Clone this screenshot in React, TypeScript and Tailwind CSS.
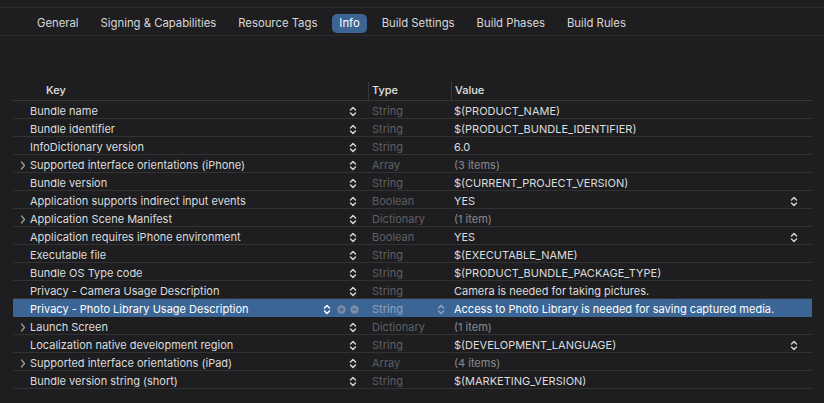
import React from "react";

type Row = {
  key: string;
  type: string;
  value: string;
  expandable?: boolean;
  dimValue?: boolean;
  picker?: boolean;
  selected?: boolean;
};

const rows: Row[] = [
  { key: "Bundle name", type: "String", value: "$(PRODUCT_NAME)" },
  { key: "Bundle identifier", type: "String", value: "$(PRODUCT_BUNDLE_IDENTIFIER)" },
  { key: "InfoDictionary version", type: "String", value: "6.0" },
  { key: "Supported interface orientations (iPhone)", type: "Array", value: "(3 items)", expandable: true, dimValue: true },
  { key: "Bundle version", type: "String", value: "$(CURRENT_PROJECT_VERSION)" },
  { key: "Application supports indirect input events", type: "Boolean", value: "YES", picker: true },
  { key: "Application Scene Manifest", type: "Dictionary", value: "(1 item)", expandable: true, dimValue: true },
  { key: "Application requires iPhone environment", type: "Boolean", value: "YES", picker: true },
  { key: "Executable file", type: "String", value: "$(EXECUTABLE_NAME)" },
  { key: "Bundle OS Type code", type: "String", value: "$(PRODUCT_BUNDLE_PACKAGE_TYPE)" },
  { key: "Privacy - Camera Usage Description", type: "String", value: "Camera is needed for taking pictures." },
  {
    key: "Privacy - Photo Library Usage Description",
    type: "String",
    value: "Access to Photo Library is needed for saving captured media.",
    selected: true,
  },
  { key: "Launch Screen", type: "Dictionary", value: "(1 item)", expandable: true, dimValue: true },
  { key: "Localization native development region", type: "String", value: "$(DEVELOPMENT_LANGUAGE)", picker: true },
  { key: "Supported interface orientations (iPad)", type: "Array", value: "(4 items)", expandable: true, dimValue: true },
  { key: "Bundle version string (short)", type: "String", value: "$(MARKETING_VERSION)" },
];

const tabs = ["General", "Signing & Capabilities", "Resource Tags", "Info", "Build Settings", "Build Phases", "Build Rules"];

// 위아래 화살표 (팝업 버튼)
const Stepper = ({ className = "" }: { className?: string }) => (
  <svg width="8" height="11" viewBox="0 0 8 11" className={className} fill="none" stroke="currentColor" strokeWidth={1.5} strokeLinecap="round" strokeLinejoin="round">
    <path d="M1.5 4 L4 1.5 L6.5 4" />
    <path d="M1.5 7 L4 9.5 L6.5 7" />
  </svg>
);

const Chevron = () => (
  <svg width="6" height="9" viewBox="0 0 6 9" fill="none" stroke="currentColor" strokeWidth={1.2} strokeLinecap="round" strokeLinejoin="round">
    <path d="M1.5 1 L4.5 4.5 L1.5 8" />
  </svg>
);

const CircleIcon = ({ minus }: { minus?: boolean }) => (
  <svg width="9" height="9" viewBox="0 0 9 9" className="text-[#7d8ea4]">
    <circle cx="4.5" cy="4.5" r="4.2" fill="currentColor" />
    <path d={minus ? "M2.3 4.5 H6.7" : "M2.3 4.5 H6.7 M4.5 2.3 V6.7"} stroke="#3e6898" strokeWidth={1.3} />
  </svg>
);

const App = () => {
  return (
    <div
      className="w-[824px] h-[403px] overflow-hidden bg-[#1e1e21] text-[#dcdcdc]"
      style={{ fontFamily: "Inter, 'Liberation Sans', sans-serif" }}
    >
      {/* 상단 탭 */}
      <div className="h-[8px] border-b border-[#2c2c2f]" />
      <div className="h-[28px] flex items-center pt-[3px] pl-[30px] gap-[8px] border-b border-[#2c2c2f] text-[11.3px] text-[#d8d8d8]">
        {tabs.map((t) => (
          <div
            key={t}
            className={`px-[7px] h-[19px] flex items-center rounded-[5px] ${t === "Info" ? "bg-[#3d6594] text-white" : ""}`}
          >
            {t}
          </div>
        ))}
      </div>

      {/* 테이블 */}
      <div className="mt-[43px] ml-[13px] w-[799px] text-[11px]">
        <div className="h-[22px] pt-[2px] grid grid-cols-[355px_83px_1fr] items-center border-b border-[#38383b] font-medium text-[#e0e0e0]">
          <div className="pl-[33px]">Key</div>
          <div className="h-[18px] flex items-center border-l border-[#3a3a3d] pl-[3px]">Type</div>
          <div className="h-[18px] flex items-center border-l border-[#3a3a3d] pl-[3px]">Value</div>
        </div>
        {rows.map((r) => (
          <div
            key={r.key}
            className={`h-[18px] pt-[2px] grid grid-cols-[355px_83px_1fr] items-center border-b ${
              r.selected ? "bg-[#3b6595] border-[#3b6595] text-white" : "border-[#323235]"
            }`}
          >
            <div className="flex items-center h-full">
              <div className="w-[17px] pl-[7px] flex items-center text-[#a0a0a0]">{r.expandable && <Chevron />}</div>
              <div className="flex-1 truncate">{r.key}</div>
              {r.selected ? (
                <div className="flex items-center gap-[4px] pr-[9px]">
                  <Stepper className="text-white mr-[2px]" />
                  <CircleIcon />
                  <CircleIcon minus />
                </div>
              ) : (
                <Stepper className="mr-[11px] text-[#d0d0d0]" />
              )}
            </div>
            <div className={`flex items-center pl-[4px] h-full ${r.selected ? "text-[#8ea3bd]" : "text-[#5f5f62]"}`}>
              <span className="flex-1">{r.type}</span>
              {r.selected && <Stepper className="mr-[6px] text-[#8ea3bd]" />}
            </div>
            <div className="flex items-center pl-[3px] h-full">
              <span className={`flex-1 ${r.dimValue ? "text-[#8a8a8d]" : ""}`}>{r.value}</span>
              {r.picker && <Stepper className="mr-[14px] text-[#d0d0d0]" />}
            </div>
          </div>
        ))}
      </div>
    </div>
  );
};

export default App;
